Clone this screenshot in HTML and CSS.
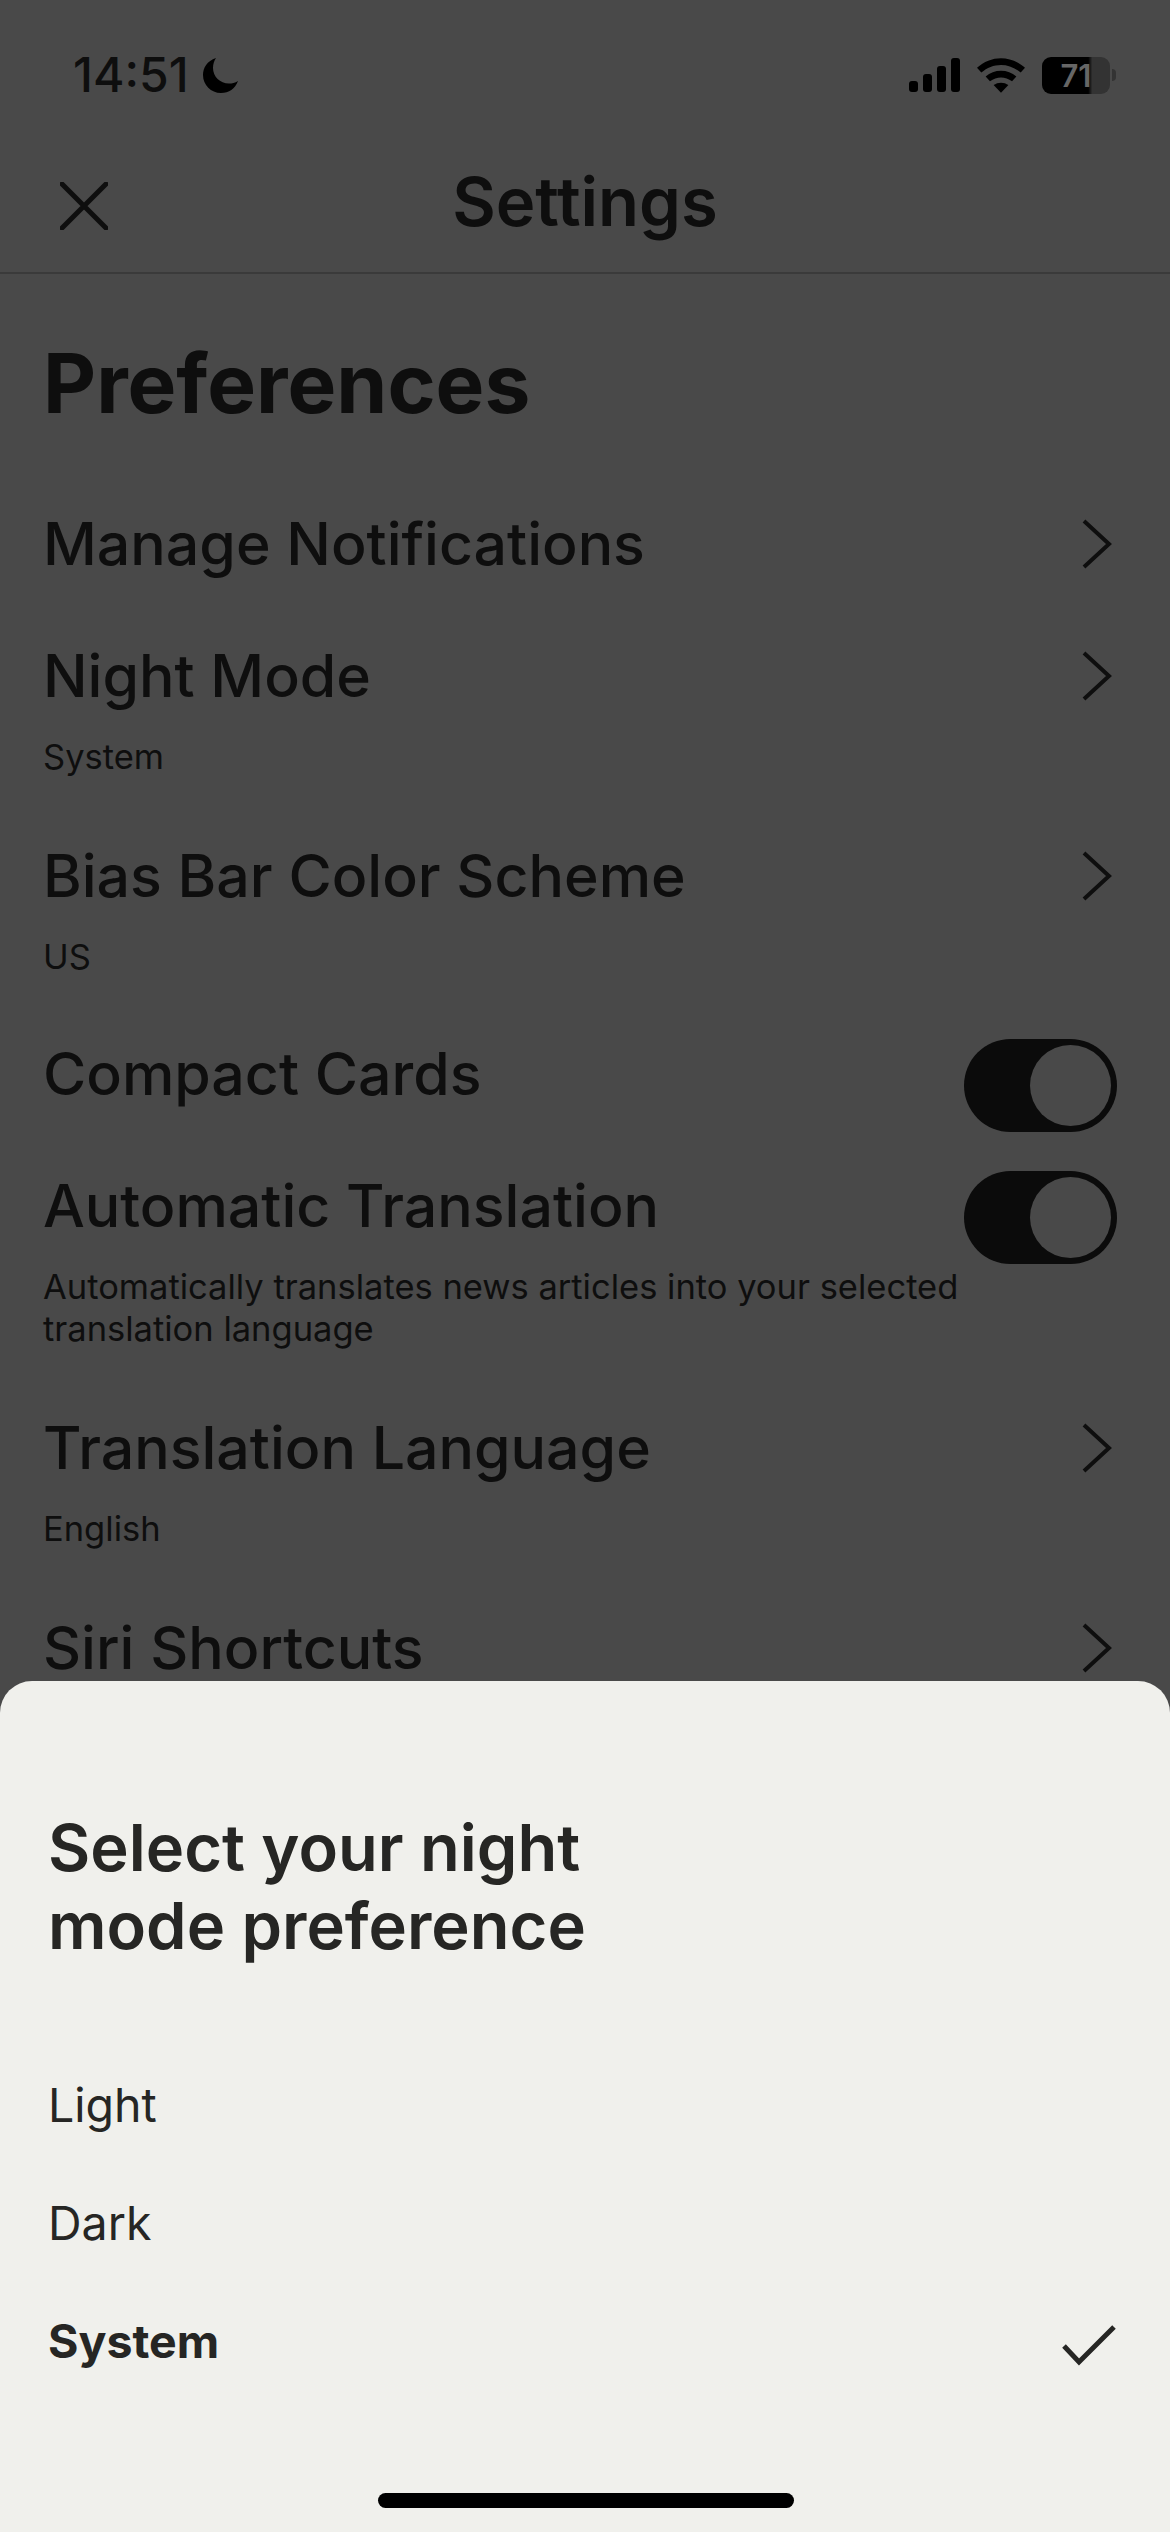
FILE: index.html
```html
<!DOCTYPE html>
<html>
<head>
    <meta charset="utf-8" />
    <title>Settings</title>
    <link rel="stylesheet" href="styles.css">
</head>
<body>
    <div class="screen">
        <div class="status_bar">
            <div class="status_left">
                <span class="clock">14:51</span>
                <svg class="moon" viewBox="0 0 36 36"><path d="M13 1 C4 4 0 11 0 18 C0 28 8 36 18 36 C26 36 32 32 35 24 C32 26 29 26.500 26 26.500 C17 26.500 10 19.500 10 11 C10 7 11 4 13 1 Z"/></svg>
            </div>
            <div class="status_right">
                <svg class="signal" viewBox="0 0 52 34">
                    <rect x="0" y="23" width="9" height="11" rx="3"/>
                    <rect x="14" y="16" width="9" height="18" rx="3"/>
                    <rect x="28" y="8" width="9" height="26" rx="3"/>
                    <rect x="42" y="0" width="9" height="34" rx="3"/>
                </svg>
                <svg class="wifi" viewBox="0 0 50 36">
                    <path d="M25 0 C34 0 43 3.500 50 10 L45.500 15 C39.500 9.800 32.500 7 25 7 C17.500 7 10.500 9.800 4.500 15 L0 10 C7 3.500 16 0 25 0 Z"/>
                    <path d="M25 13 C31 13 36.500 15 41 19 L36.500 24 C33 21.300 29 20 25 20 C21 20 17 21.300 13.500 24 L9 19 C13.500 15 19 13 25 13 Z"/>
                    <path d="M25 25.500 C27.800 25.500 30.500 26.400 32.700 28 L25 36 L17.300 28 C19.500 26.400 22.200 25.500 25 25.500 Z"/>
                </svg>
                <div class="battery"><span>71</span></div>
                <div class="battery_tip"></div>
            </div>
        </div>

        <div class="nav_bar">
            <svg class="close" viewBox="0 0 48 48"><path d="M2 2 L46 46 M46 2 L2 46"/></svg>
            <div class="nav_title">Settings</div>
        </div>

        <div class="content">
            <h1>Preferences</h1>

            <div class="row">
                <div class="row_text"><div class="row_title">Manage Notifications</div></div>
                <svg class="chevron" viewBox="0 0 30 50"><path d="M2 2 L27 25 L2 48"/></svg>
            </div>
            <div class="row">
                <div class="row_text">
                    <div class="row_title">Night Mode</div>
                    <div class="row_sub">System</div>
                </div>
                <svg class="chevron" viewBox="0 0 30 50"><path d="M2 2 L27 25 L2 48"/></svg>
            </div>
            <div class="row row_short">
                <div class="row_text">
                    <div class="row_title">Bias Bar Color Scheme</div>
                    <div class="row_sub">US</div>
                </div>
                <svg class="chevron" viewBox="0 0 30 50"><path d="M2 2 L27 25 L2 48"/></svg>
            </div>
            <div class="row">
                <div class="row_text"><div class="row_title">Compact Cards</div></div>
                <div class="toggle"></div>
            </div>
            <div class="row">
                <div class="row_text">
                    <div class="row_title">Automatic Translation</div>
                    <div class="row_sub">Automatically translates news articles into your selected translation language</div>
                </div>
                <div class="toggle"></div>
            </div>
            <div class="row">
                <div class="row_text">
                    <div class="row_title">Translation Language</div>
                    <div class="row_sub">English</div>
                </div>
                <svg class="chevron" viewBox="0 0 30 50"><path d="M2 2 L27 25 L2 48"/></svg>
            </div>
            <div class="row">
                <div class="row_text"><div class="row_title">Siri Shortcuts</div></div>
                <svg class="chevron" viewBox="0 0 30 50"><path d="M2 2 L27 25 L2 48"/></svg>
            </div>
        </div>

        <div class="sheet">
            <h2>Select your night<br>mode preference</h2>
            <div class="option">Light</div>
            <div class="option">Dark</div>
            <div class="option selected">
                <span>System</span>
                <svg class="check" viewBox="0 0 54 42"><path d="M2 22 L17 38 L52 3"/></svg>
            </div>
            <div class="home_bar"></div>
        </div>
    </div>
</body>
</html>
```

FILE: styles.css
```css
html, body {
    margin: 0;
    padding: 0;
}

body {
    background-color: #494949;
    color: #0e0e0e;
    font-family: Inter, "Liberation Sans", sans-serif;
}

.screen {
    position: relative;
    width: 1170px;
    height: 2532px;
    overflow: hidden;
}

.status_bar {
    height: 150px;
    box-sizing: border-box;
    padding: 50px 54px 0 73px;
    display: flex;
    justify-content: space-between;
    align-items: flex-start;
}
.status_left {
    display: flex;
    align-items: center;
    gap: 14px;
}
.clock {
    font-size: 48px;
    line-height: 50px;
    font-weight: 500;
}
.moon {
    width: 36px;
    height: 36px;
    fill: #000;
}
.status_right {
    display: flex;
    align-items: center;
    height: 50px;
}
.signal {
    width: 52px;
    height: 34px;
    fill: #000;
    margin-right: 16px;
}
.wifi {
    width: 48px;
    height: 35px;
    fill: #000;
    margin-right: 17px;
}
.battery {
    width: 68px;
    height: 37px;
    border-radius: 9px;
    background: linear-gradient(to right, #000 0, #000 68%, #333 74%, #333 100%);
    color: #666;
    font-size: 31px;
    font-weight: 600;
    line-height: 37px;
    text-align: center;
}
.battery_tip {
    width: 4px;
    height: 12px;
    margin-left: 2px;
    background: #333;
    border-radius: 0 4px 4px 0;
}

.nav_bar {
    height: 124px;
    box-sizing: border-box;
    border-bottom: 2px solid #3a3a3a;
    display: flex;
    align-items: center;
    justify-content: center;
    position: relative;
}
.close {
    position: absolute;
    left: 60px;
    top: 32px;
    width: 48px;
    height: 48px;
    fill: none;
    stroke: #0e0e0e;
    stroke-width: 5;
    stroke-linecap: round;
}
.nav_title {
    font-size: 67px;
    font-weight: 600;
    margin-top: -20px;
}

.content {
    padding: 0 54px 0 43px;
}
h1 {
    margin: 0;
    padding: 63px 0 79px;
    font-size: 82px;
    line-height: 94px;
    font-weight: 700;
}

.row {
    display: flex;
    justify-content: space-between;
    align-items: flex-start;
    padding-bottom: 64px;
}
.row_short {
    padding-bottom: 62px;
}
.row_text {
    flex: 1;
    max-width: 930px;
}
.row_title {
    font-size: 59px;
    line-height: 68px;
    font-weight: 500;
}
.row_sub {
    font-size: 34.500px;
    line-height: 42px;
    font-weight: 400;
    margin-top: 26px;
}
.chevron {
    width: 30px;
    height: 50px;
    margin: 9px 4px 0 0;
    fill: none;
    stroke: #0e0e0e;
    stroke-width: 4;
}
.toggle {
    position: relative;
    width: 153px;
    height: 93px;
    margin-top: -1px;
    margin-bottom: -24px;
    margin-right: -1px;
    border-radius: 47px;
    background: #0b0b0b;
}
.toggle::after {
    content: "";
    position: absolute;
    top: 6px;
    right: 6px;
    width: 81px;
    height: 81px;
    border-radius: 50%;
    background: #494949;
}

.sheet {
    position: absolute;
    left: 0;
    right: 0;
    bottom: 0;
    height: 851px;
    box-sizing: border-box;
    padding: 128px 48px 0;
    background: #f0f0ec;
    border-radius: 32px 32px 0 0;
    color: #262624;
}
.sheet h2 {
    margin: 0 0 81px;
    font-size: 65px;
    line-height: 78px;
    font-weight: 600;
}
.option {
    display: flex;
    justify-content: space-between;
    align-items: center;
    height: 118px;
    font-size: 46.500px;
    font-weight: 400;
}
.option.selected {
    font-weight: 700;
}
.check {
    width: 54px;
    height: 42px;
    margin: 8px 6px 0 0;
    fill: none;
    stroke: #262624;
    stroke-width: 5;
}
.home_bar {
    position: absolute;
    left: 378px;
    bottom: 24px;
    width: 416px;
    height: 15px;
    border-radius: 8px;
    background: #000;
}
```
